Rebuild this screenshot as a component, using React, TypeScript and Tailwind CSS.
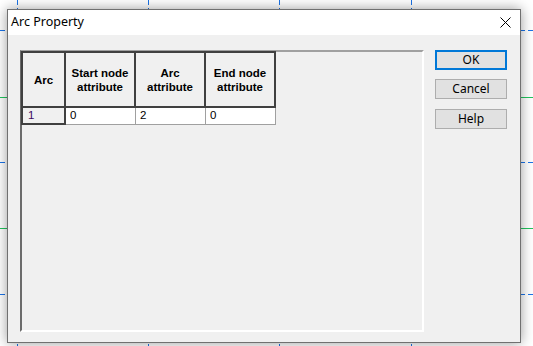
import React from "react";

const headers = [
  { w: "w-[43px]", lines: ["Arc"] },
  { w: "w-[70px]", lines: ["Start node", "attribute"] },
  { w: "w-[70px]", lines: ["Arc", "attribute"] },
  { w: "w-[70px]", lines: ["End node", "attribute"] },
];

function Background() {
  const vx = [17, 148, 279, 411];
  const hb = [30, 162, 294];
  const hg = [97, 228];
  return (
    <svg className="absolute inset-0" width={533} height={346}>
      {vx.map((x) => (
        <line key={"v" + x} x1={x + 0.5} y1={0} x2={x + 0.5} y2={346} stroke="#1a73e8" strokeDasharray="5 3" />
      ))}
      {hb.map((y) => (
        <line key={"b" + y} x1={0} y1={y + 0.5} x2={533} y2={y + 0.5} stroke="#1a73e8" strokeDasharray="5 3" />
      ))}
      {hg.map((y) => (
        <line key={"g" + y} x1={0} y1={y + 0.5} x2={533} y2={y + 0.5} stroke="#22c55e" />
      ))}
    </svg>
  );
}

function Btn({ label, primary }: { label: string; primary?: boolean }) {
  return (
    <div
      className={
        "w-[72px] h-[20px] flex items-center justify-center bg-[#e1e1e1] text-[12px] text-black " +
        (primary ? "border-2 border-[#0078d7]" : "border border-[#adadad]")
      }
    >
      {label}
    </div>
  );
}

export default function App() {
  return (
    <div
      className="relative w-[533px] h-[346px] overflow-hidden bg-white"
      style={{ fontFamily: '"Noto Sans", "Liberation Sans", sans-serif' }}
    >
      <Background />
      <div className="relative ml-[7px] mt-[9px] w-[514px] h-[334px] border border-[#707070] bg-[#f0f0f0] shadow-[0_0_12px_rgba(0,0,0,0.4)] flex flex-col">
        <div className="h-[25px] bg-white flex items-center justify-between pl-[3px] pr-[9px]">
          <span className="text-[12.5px] text-black leading-none">Arc Property</span>
          <svg width="11" height="11" viewBox="0 0 11 11">
            <path d="M0.5 0.5 L10.5 10.5 M10.5 0.5 L0.5 10.5" stroke="#000" strokeWidth="1" />
          </svg>
        </div>
        <div className="flex flex-1 pl-[12px] pt-[15px] pb-[9px]">
          <div className="w-[404px] h-[282px] border-t-2 border-l-2 border-t-[#a0a0a0] border-l-[#6b6b6b] border-b-2 border-r-2 border-b-white border-r-white bg-[#f0f0f0]">
            <div
              className="inline-flex flex-col border-t-2 border-l-2 border-[#404040] -mt-px -ml-px"
              style={{ fontFamily: '"Liberation Sans", Arial, sans-serif' }}
            >
              <div className="flex h-[55px]">
                {headers.map((h, i) => (
                  <div
                    key={i}
                    className={
                      h.w +
                      " h-full border-r-2 border-b-2 border-[#404040] bg-[#f0f0f0] flex flex-col items-center justify-center text-[11.5px] font-bold text-black leading-[14px]"
                    }
                  >
                    {h.lines.map((l) => (
                      <span key={l}>{l}</span>
                    ))}
                  </div>
                ))}
              </div>
              <div className="flex h-[17px] text-[11.5px] leading-none">
                <div className="w-[43px] h-full border-r-2 border-b-2 border-[#404040] bg-[#f0f0f0] text-[#3b0a62] flex items-center pl-[5px]">
                  1
                </div>
                <div className="w-[70px] h-full border-r border-b border-[#a0a0a0] bg-white flex items-center pl-[4px] text-black">
                  0
                </div>
                <div className="w-[70px] h-full border-r border-b border-[#a0a0a0] bg-white flex items-center pl-[4px] text-black">
                  2
                </div>
                <div className="w-[70px] h-full border-r border-b border-[#a0a0a0] bg-white flex items-center pl-[4px] text-black">
                  0
                </div>
              </div>
            </div>
          </div>
          <div className="ml-[11px] flex flex-col gap-[9px]">
            <Btn label="OK" primary />
            <div className="flex flex-col gap-[10px]">
              <Btn label="Cancel" />
              <Btn label="Help" />
            </div>
          </div>
        </div>
      </div>
    </div>
  );
}
